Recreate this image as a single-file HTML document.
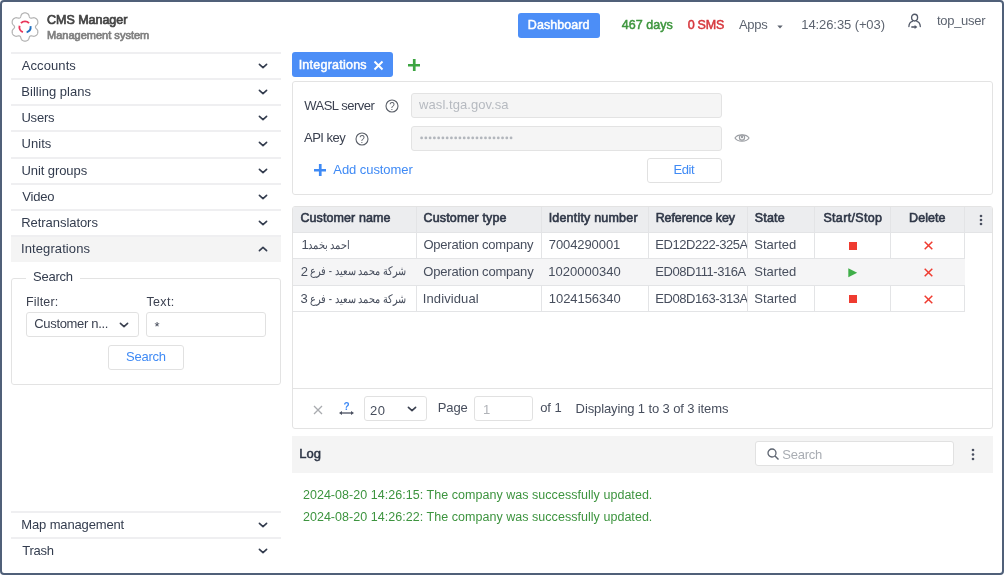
<!DOCTYPE html>
<html><head><meta charset="utf-8">
<style>
*{box-sizing:border-box;margin:0;padding:0}
html,body{width:1004px;height:575px;overflow:hidden;background:#fff}
body{font-family:"Liberation Sans",sans-serif;font-size:13px;color:#333c4e;position:relative}
.frame{position:absolute;left:0;top:0;width:1004px;height:575px;border:2px solid #506079;border-radius:4px;z-index:50}
.abs{position:absolute}
.t,.t2{position:absolute;white-space:nowrap}
.wrap{position:absolute;left:0;top:0;width:1004px;height:575px;will-change:transform}
.sep{position:absolute;left:11px;width:270px;height:2px;margin-top:-1px;background:#efeff1}
</style></head>
<body>
<div class="wrap">
<svg class="abs" style="left:10.4px;top:12.1px" width="30" height="30" viewBox="0 0 30 30"><path d="M25.50,15.00 L25.50,15.27 L25.51,15.55 L25.62,15.84 L25.83,16.14 L26.11,16.46 L26.45,16.81 L26.80,17.19 L27.14,17.58 L27.44,17.99 L27.66,18.39 L27.79,18.79 L27.81,19.16 L27.78,19.53 L27.82,19.92 L27.82,20.31 L27.78,20.69 L27.71,21.06 L27.61,21.42 L27.47,21.77 L27.30,22.10 L27.10,22.41 L26.87,22.71 L26.61,22.98 L26.32,23.22 L26.01,23.45 L25.67,23.64 L25.31,23.81 L25.01,24.02 L24.68,24.18 L24.27,24.27 L23.80,24.28 L23.30,24.22 L22.79,24.12 L22.29,24.01 L21.82,23.89 L21.40,23.81 L21.04,23.78 L20.73,23.83 L20.49,23.95 L20.25,24.09 L20.01,24.23 L19.78,24.38 L19.59,24.62 L19.43,24.95 L19.29,25.36 L19.15,25.82 L19.01,26.31 L18.84,26.80 L18.63,27.26 L18.39,27.66 L18.11,27.97 L17.80,28.18 L17.47,28.34 L17.15,28.56 L16.81,28.76 L16.46,28.92 L16.10,29.04 L15.74,29.13 L15.37,29.18 L15.00,29.20 L14.63,29.18 L14.26,29.13 L13.90,29.04 L13.54,28.92 L13.19,28.76 L12.85,28.56 L12.53,28.34 L12.20,28.18 L11.89,27.97 L11.61,27.66 L11.37,27.26 L11.16,26.80 L10.99,26.31 L10.85,25.82 L10.71,25.36 L10.57,24.95 L10.41,24.62 L10.22,24.38 L9.99,24.23 L9.75,24.09 L9.51,23.95 L9.27,23.83 L8.96,23.78 L8.60,23.81 L8.18,23.89 L7.71,24.01 L7.21,24.12 L6.70,24.22 L6.20,24.28 L5.73,24.27 L5.32,24.18 L4.99,24.02 L4.69,23.81 L4.33,23.64 L3.99,23.45 L3.68,23.22 L3.39,22.98 L3.13,22.71 L2.90,22.41 L2.70,22.10 L2.53,21.77 L2.39,21.42 L2.29,21.06 L2.22,20.69 L2.18,20.31 L2.18,19.92 L2.22,19.53 L2.19,19.16 L2.21,18.79 L2.34,18.39 L2.56,17.99 L2.86,17.58 L3.20,17.19 L3.55,16.81 L3.89,16.46 L4.17,16.14 L4.38,15.84 L4.49,15.55 L4.50,15.27 L4.50,15.00 L4.50,14.73 L4.49,14.45 L4.38,14.16 L4.17,13.86 L3.89,13.54 L3.55,13.19 L3.20,12.81 L2.86,12.42 L2.56,12.01 L2.34,11.61 L2.21,11.21 L2.19,10.84 L2.22,10.47 L2.18,10.08 L2.18,9.69 L2.22,9.31 L2.29,8.94 L2.39,8.58 L2.53,8.23 L2.70,7.90 L2.90,7.59 L3.13,7.29 L3.39,7.02 L3.68,6.78 L3.99,6.55 L4.33,6.36 L4.69,6.19 L4.99,5.98 L5.32,5.82 L5.73,5.73 L6.20,5.72 L6.70,5.78 L7.21,5.88 L7.71,5.99 L8.18,6.11 L8.60,6.19 L8.96,6.22 L9.27,6.17 L9.51,6.05 L9.75,5.91 L9.99,5.77 L10.22,5.62 L10.41,5.38 L10.57,5.05 L10.71,4.64 L10.85,4.18 L10.99,3.69 L11.16,3.20 L11.37,2.74 L11.61,2.34 L11.89,2.03 L12.20,1.82 L12.53,1.66 L12.85,1.44 L13.19,1.24 L13.54,1.08 L13.90,0.96 L14.26,0.87 L14.63,0.82 L15.00,0.80 L15.37,0.82 L15.74,0.87 L16.10,0.96 L16.46,1.08 L16.81,1.24 L17.15,1.44 L17.47,1.66 L17.80,1.82 L18.11,2.03 L18.39,2.34 L18.63,2.74 L18.84,3.20 L19.01,3.69 L19.15,4.18 L19.29,4.64 L19.43,5.05 L19.59,5.38 L19.78,5.62 L20.01,5.77 L20.25,5.91 L20.49,6.05 L20.73,6.17 L21.04,6.22 L21.40,6.19 L21.82,6.11 L22.29,5.99 L22.79,5.88 L23.30,5.78 L23.80,5.72 L24.27,5.73 L24.68,5.82 L25.01,5.98 L25.31,6.19 L25.67,6.36 L26.01,6.55 L26.32,6.78 L26.61,7.02 L26.87,7.29 L27.10,7.59 L27.30,7.90 L27.47,8.23 L27.61,8.58 L27.71,8.94 L27.78,9.31 L27.82,9.69 L27.82,10.08 L27.78,10.47 L27.81,10.84 L27.79,11.21 L27.66,11.61 L27.44,12.01 L27.14,12.42 L26.80,12.81 L26.45,13.19 L26.11,13.54 L25.83,13.86 L25.62,14.16 L25.51,14.45 L25.50,14.73Z" fill="none" stroke="#b3b3b3" stroke-width="1.2"/><path d="M10.97,11.11 A5.6,5.6 0 0 1 19.03,11.11" fill="none" stroke="#e8365a" stroke-width="1.9"/><path d="M12.90,20.19 A5.6,5.6 0 0 1 9.57,13.65" fill="none" stroke="#e8365a" stroke-width="1.9"/><path d="M20.55,14.22 A5.6,5.6 0 0 1 16.64,20.36" fill="none" stroke="#1f6fc0" stroke-width="1.9"/></svg>
<div class="t" style="left:47.09px;top:13.82px;font-size:12.5px;line-height:12.5px;color:#444444;font-weight:normal;letter-spacing:-0.037px;-webkit-text-stroke:0.7px #444444;">CMS Manager</div>
<div class="t" style="left:47.00px;top:29.69px;font-size:11px;line-height:11px;color:#808080;font-weight:normal;letter-spacing:0.010px;-webkit-text-stroke:0.7px #808080;">Management system</div>
<div class="abs" style="left:518px;top:13px;width:82px;height:25px;background:#4c8ef7;border-radius:3px"></div>
<div class="t" style="left:527.81px;top:19.32px;font-size:12.5px;line-height:12.5px;color:#ffffff;font-weight:normal;letter-spacing:0.071px;-webkit-text-stroke:0.5px #ffffff;">Dashboard</div>
<div class="t" style="left:621.82px;top:18.62px;font-size:12.5px;line-height:12.5px;color:#3e963e;font-weight:normal;letter-spacing:0.020px;-webkit-text-stroke:0.5px #3e963e;">467 days</div>
<div class="t" style="left:687.66px;top:18.72px;font-size:12.5px;line-height:12.5px;color:#d6353b;font-weight:normal;letter-spacing:-0.229px;-webkit-text-stroke:0.5px #d6353b;">0 SMS</div>
<div class="t" style="left:739.04px;top:18.30px;font-size:13px;line-height:13px;color:#5d6470;font-weight:normal;letter-spacing:-0.333px;">Apps</div>
<svg class="abs" style="left:777px;top:24.5px" width="6" height="4" viewBox="0 0 6 4"><path d="M0.3,0.5 L5.7,0.5 L3,3.6Z" fill="#5d6470"/></svg>
<div class="t" style="left:801.35px;top:18.30px;font-size:13px;line-height:13px;color:#5d6470;font-weight:normal;letter-spacing:-0.101px;">14:26:35 (+03)</div>
<svg class="abs" style="left:903px;top:10px" width="24" height="22" viewBox="0 0 24 22"><ellipse cx="11.6" cy="7.6" rx="3.0" ry="3.4" fill="none" stroke="#525968" stroke-width="1.35"/><path d="M9.4,11.3 C7.2,11.9 6.0,13.0 5.9,16.6 M13.8,11.3 C16.0,11.9 17.2,13.0 17.3,16.6" fill="none" stroke="#525968" stroke-width="1.3" stroke-linecap="round"/><path d="M8.3,17.0 H12.6" stroke="#525968" stroke-width="1.6"/><path d="M11.6,15.0 L14.4,17.0 L11.6,19.0Z" fill="#525968"/></svg>
<div class="t" style="left:936.94px;top:14.40px;font-size:13px;line-height:13px;color:#5d6470;font-weight:normal;letter-spacing:-0.286px;">top_user</div>
<div class="sep" style="top:53px"></div>
<div class="t" style="left:21.69px;top:58.80px;font-size:13px;line-height:13px;color:#333c4e;font-weight:normal;letter-spacing:0.101px;">Accounts</div>
<svg class="abs" style="left:257.5px;top:63.3px" width="10" height="6" viewBox="0 0 10 6"><path d="M1.4,1.3 L5,4.7 L8.6,1.3" fill="none" stroke="#333c4e" stroke-width="1.6" stroke-linecap="round" stroke-linejoin="round"/></svg>
<div class="sep" style="top:79px"></div>
<div class="t" style="left:21.37px;top:84.80px;font-size:13px;line-height:13px;color:#333c4e;font-weight:normal;letter-spacing:0.018px;">Billing plans</div>
<svg class="abs" style="left:257.5px;top:89.3px" width="10" height="6" viewBox="0 0 10 6"><path d="M1.4,1.3 L5,4.7 L8.6,1.3" fill="none" stroke="#333c4e" stroke-width="1.6" stroke-linecap="round" stroke-linejoin="round"/></svg>
<div class="sep" style="top:105px"></div>
<div class="t" style="left:21.41px;top:110.80px;font-size:13px;line-height:13px;color:#333c4e;font-weight:normal;letter-spacing:-0.187px;">Users</div>
<svg class="abs" style="left:257.5px;top:115.3px" width="10" height="6" viewBox="0 0 10 6"><path d="M1.4,1.3 L5,4.7 L8.6,1.3" fill="none" stroke="#333c4e" stroke-width="1.6" stroke-linecap="round" stroke-linejoin="round"/></svg>
<div class="sep" style="top:131px"></div>
<div class="t" style="left:21.45px;top:136.80px;font-size:13px;line-height:13px;color:#333c4e;font-weight:normal;letter-spacing:0.067px;">Units</div>
<svg class="abs" style="left:257.5px;top:141.3px" width="10" height="6" viewBox="0 0 10 6"><path d="M1.4,1.3 L5,4.7 L8.6,1.3" fill="none" stroke="#333c4e" stroke-width="1.6" stroke-linecap="round" stroke-linejoin="round"/></svg>
<div class="sep" style="top:158px"></div>
<div class="t" style="left:21.46px;top:163.80px;font-size:13px;line-height:13px;color:#333c4e;font-weight:normal;letter-spacing:-0.078px;">Unit groups</div>
<svg class="abs" style="left:257.5px;top:168.3px" width="10" height="6" viewBox="0 0 10 6"><path d="M1.4,1.3 L5,4.7 L8.6,1.3" fill="none" stroke="#333c4e" stroke-width="1.6" stroke-linecap="round" stroke-linejoin="round"/></svg>
<div class="sep" style="top:184px"></div>
<div class="t" style="left:22.17px;top:189.80px;font-size:13px;line-height:13px;color:#333c4e;font-weight:normal;letter-spacing:-0.149px;">Video</div>
<svg class="abs" style="left:257.5px;top:194.3px" width="10" height="6" viewBox="0 0 10 6"><path d="M1.4,1.3 L5,4.7 L8.6,1.3" fill="none" stroke="#333c4e" stroke-width="1.6" stroke-linecap="round" stroke-linejoin="round"/></svg>
<div class="sep" style="top:210px"></div>
<div class="t" style="left:21.28px;top:215.80px;font-size:13px;line-height:13px;color:#333c4e;font-weight:normal;letter-spacing:-0.058px;">Retranslators</div>
<svg class="abs" style="left:257.5px;top:220.3px" width="10" height="6" viewBox="0 0 10 6"><path d="M1.4,1.3 L5,4.7 L8.6,1.3" fill="none" stroke="#333c4e" stroke-width="1.6" stroke-linecap="round" stroke-linejoin="round"/></svg>
<div class="sep" style="top:236px"></div>
<div class="abs" style="left:11px;top:237px;width:270px;height:25px;background:#f4f4f4"></div>
<div class="t" style="left:21.10px;top:241.80px;font-size:13px;line-height:13px;color:#333c4e;font-weight:normal;letter-spacing:0.085px;">Integrations</div>
<svg class="abs" style="left:257.5px;top:246px" width="10" height="6" viewBox="0 0 10 6"><path d="M1.4,4.7 L5,1.3 L8.6,4.7" fill="none" stroke="#333c4e" stroke-width="1.6" stroke-linecap="round" stroke-linejoin="round"/></svg>
<div class="abs" style="left:11px;top:278px;width:270px;height:107px;border:1px solid #e3e3e3;border-radius:3px"></div>
<div class="abs" style="left:26px;top:272px;width:54px;height:10px;background:#fff"></div>
<div class="t" style="left:32.97px;top:270.40px;font-size:13px;line-height:13px;color:#333c4e;font-weight:normal;letter-spacing:-0.219px;">Search</div>
<div class="t" style="left:26.03px;top:296.12px;font-size:12.5px;line-height:12.5px;color:#3b4150;font-weight:normal;letter-spacing:0.158px;">Filter:</div>
<div class="t" style="left:146.49px;top:296.42px;font-size:12.5px;line-height:12.5px;color:#3b4150;font-weight:normal;letter-spacing:0.320px;">Text:</div>
<div class="abs" style="left:26px;top:312px;width:113px;height:25px;border:1px solid #e1e1e1;border-radius:3px"></div>
<div class="t" style="left:34.31px;top:317.30px;font-size:13px;line-height:13px;color:#3b4150;font-weight:normal;letter-spacing:-0.333px;">Customer n...</div>
<svg class="abs" style="left:119px;top:322px" width="10" height="6" viewBox="0 0 10 6"><path d="M1.4,1.3 L5,4.7 L8.6,1.3" fill="none" stroke="#3b4150" stroke-width="1.6" stroke-linecap="round" stroke-linejoin="round"/></svg>
<div class="abs" style="left:146px;top:312px;width:120px;height:25px;border:1px solid #e1e1e1;border-radius:3px"></div>
<div class="t" style="left:154.50px;top:320.00px;font-size:13px;line-height:13px;color:#3b4150;font-weight:normal;letter-spacing:0.000px;">*</div>
<div class="abs" style="left:108px;top:345px;width:76px;height:25px;border:1px solid #e1e1e1;border-radius:3px"></div>
<div class="t" style="left:125.95px;top:350.00px;font-size:13px;line-height:13px;color:#3f8af5;font-weight:normal;letter-spacing:-0.226px;">Search</div>
<div class="sep" style="top:512px"></div>
<div class="t" style="left:21.37px;top:517.80px;font-size:13px;line-height:13px;color:#333c4e;font-weight:normal;letter-spacing:-0.151px;">Map management</div>
<svg class="abs" style="left:257.5px;top:522.3px" width="10" height="6" viewBox="0 0 10 6"><path d="M1.4,1.3 L5,4.7 L8.6,1.3" fill="none" stroke="#333c4e" stroke-width="1.6" stroke-linecap="round" stroke-linejoin="round"/></svg>
<div class="sep" style="top:538px"></div>
<div class="t" style="left:22.15px;top:543.80px;font-size:13px;line-height:13px;color:#333c4e;font-weight:normal;letter-spacing:-0.213px;">Trash</div>
<svg class="abs" style="left:257.5px;top:548.3px" width="10" height="6" viewBox="0 0 10 6"><path d="M1.4,1.3 L5,4.7 L8.6,1.3" fill="none" stroke="#333c4e" stroke-width="1.6" stroke-linecap="round" stroke-linejoin="round"/></svg>
<div class="abs" style="left:292px;top:52px;width:101px;height:25px;background:#4c8ef7;border-radius:3px"></div>
<div class="t" style="left:298.65px;top:58.92px;font-size:12.5px;line-height:12.5px;color:#ffffff;font-weight:normal;letter-spacing:0.237px;-webkit-text-stroke:0.5px #ffffff;">Integrations</div>
<svg class="abs" style="left:373px;top:60px" width="11" height="11" viewBox="0 0 11 11"><path d="M1.5,1.5 L9.5,9.5 M9.5,1.5 L1.5,9.5" stroke="#fff" stroke-width="2"/></svg>
<svg class="abs" style="left:407.8px;top:58.5px" width="12.5" height="12.5" viewBox="0 0 12.5 12.5"><path d="M6.25,0 V12.5 M0,6.25 H12.5" stroke="#3da542" stroke-width="2.7"/></svg>
<div class="abs" style="left:292px;top:81px;width:701px;height:114px;border:1px solid #e3e3e3;border-radius:3px"></div>
<div class="t" style="left:304.22px;top:98.50px;font-size:13px;line-height:13px;color:#3b4150;font-weight:normal;letter-spacing:-0.493px;">WASL server</div>
<svg class="abs" style="left:384.5px;top:98.5px" width="14" height="14" viewBox="0 0 14 14"><circle cx="7" cy="7" r="6" fill="none" stroke="#5a5f68" stroke-width="1.1"/><text x="7" y="10.6" text-anchor="middle" font-family="Liberation Sans" font-size="10" fill="#5a5f68">?</text></svg>
<div class="abs" style="left:411px;top:93px;width:311px;height:25px;border:1px solid #e3e3e3;border-radius:3px;background:#f5f5f5"></div>
<div class="t" style="left:419.12px;top:97.90px;font-size:13px;line-height:13px;color:#b6bac0;font-weight:normal;letter-spacing:0.053px;">wasl.tga.gov.sa</div>
<div class="t" style="left:304.10px;top:131.00px;font-size:13px;line-height:13px;color:#3b4150;font-weight:normal;letter-spacing:-0.542px;">API key</div>
<svg class="abs" style="left:355px;top:131.5px" width="14" height="14" viewBox="0 0 14 14"><circle cx="7" cy="7" r="6" fill="none" stroke="#5a5f68" stroke-width="1.1"/><text x="7" y="10.6" text-anchor="middle" font-family="Liberation Sans" font-size="10" fill="#5a5f68">?</text></svg>
<div class="abs" style="left:411px;top:126px;width:311px;height:25px;border:1px solid #e3e3e3;border-radius:3px;background:#f5f5f5"></div>
<svg class="abs" style="left:420px;top:136px" width="100" height="4" viewBox="0 0 100 4"><circle cx="1.60" cy="1.9" r="1.4" fill="#b2b6bc"/><circle cx="5.86" cy="1.9" r="1.4" fill="#b2b6bc"/><circle cx="10.12" cy="1.9" r="1.4" fill="#b2b6bc"/><circle cx="14.38" cy="1.9" r="1.4" fill="#b2b6bc"/><circle cx="18.64" cy="1.9" r="1.4" fill="#b2b6bc"/><circle cx="22.90" cy="1.9" r="1.4" fill="#b2b6bc"/><circle cx="27.16" cy="1.9" r="1.4" fill="#b2b6bc"/><circle cx="31.42" cy="1.9" r="1.4" fill="#b2b6bc"/><circle cx="35.68" cy="1.9" r="1.4" fill="#b2b6bc"/><circle cx="39.94" cy="1.9" r="1.4" fill="#b2b6bc"/><circle cx="44.20" cy="1.9" r="1.4" fill="#b2b6bc"/><circle cx="48.46" cy="1.9" r="1.4" fill="#b2b6bc"/><circle cx="52.72" cy="1.9" r="1.4" fill="#b2b6bc"/><circle cx="56.98" cy="1.9" r="1.4" fill="#b2b6bc"/><circle cx="61.24" cy="1.9" r="1.4" fill="#b2b6bc"/><circle cx="65.50" cy="1.9" r="1.4" fill="#b2b6bc"/><circle cx="69.76" cy="1.9" r="1.4" fill="#b2b6bc"/><circle cx="74.02" cy="1.9" r="1.4" fill="#b2b6bc"/><circle cx="78.28" cy="1.9" r="1.4" fill="#b2b6bc"/><circle cx="82.54" cy="1.9" r="1.4" fill="#b2b6bc"/><circle cx="86.80" cy="1.9" r="1.4" fill="#b2b6bc"/><circle cx="91.06" cy="1.9" r="1.4" fill="#b2b6bc"/></svg>
<svg class="abs" style="left:734px;top:132px" width="16" height="12" viewBox="0 0 16 12"><path d="M1,6 C3.5,1.8 12.5,1.8 15,6 C12.5,10.2 3.5,10.2 1,6Z" fill="none" stroke="#9c9fa4" stroke-width="1.2"/><circle cx="8" cy="5.6" r="2.6" fill="none" stroke="#9c9fa4" stroke-width="1.2"/><circle cx="8" cy="5" r="1.2" fill="#9c9fa4"/></svg>
<svg class="abs" style="left:313.6px;top:163.8px" width="12.5" height="12.5" viewBox="0 0 12.5 12.5"><path d="M6.25,0 V12.5 M0,6.25 H12.5" stroke="#3f8af5" stroke-width="2.7"/></svg>
<div class="t" style="left:333.37px;top:162.80px;font-size:13px;line-height:13px;color:#3f8af5;font-weight:normal;letter-spacing:-0.074px;">Add customer</div>
<div class="abs" style="left:647px;top:158px;width:75px;height:25px;border:1px solid #e1e1e1;border-radius:3px"></div>
<div class="t" style="left:673.46px;top:163.30px;font-size:13px;line-height:13px;color:#3f8af5;font-weight:normal;letter-spacing:-0.417px;">Edit</div>
<div class="abs" style="left:292px;top:206px;width:701px;height:223px;border:1px solid #e3e3e3;border-radius:3px"></div>
<div class="abs" style="left:293px;top:207px;width:699px;height:25px;background:#ecedef;border-radius:2px 2px 0 0"></div>
<div class="abs" style="left:416px;top:207px;width:1px;height:105px;background:#e3e4e6"></div>
<div class="abs" style="left:541px;top:207px;width:1px;height:105px;background:#e3e4e6"></div>
<div class="abs" style="left:648px;top:207px;width:1px;height:105px;background:#e3e4e6"></div>
<div class="abs" style="left:747px;top:207px;width:1px;height:105px;background:#e3e4e6"></div>
<div class="abs" style="left:814px;top:207px;width:1px;height:105px;background:#e3e4e6"></div>
<div class="abs" style="left:890px;top:207px;width:1px;height:105px;background:#e3e4e6"></div>
<div class="abs" style="left:964px;top:207px;width:1px;height:105px;background:#e3e4e6"></div>
<div class="abs" style="left:293px;top:232px;width:699px;height:1px;background:#e3e4e6"></div>
<div class="abs" style="left:293px;top:258px;width:672px;height:1px;background:#e3e4e6"></div>
<div class="abs" style="left:293px;top:259px;width:672px;height:26px;background:#f5f5f6"></div>
<div class="abs" style="left:293px;top:285px;width:672px;height:1px;background:#e3e4e6"></div>
<div class="abs" style="left:293px;top:311px;width:672px;height:1px;background:#e3e4e6"></div>
<div class="t" style="left:300.41px;top:212.42px;font-size:12.5px;line-height:12.5px;color:#2f3747;font-weight:normal;letter-spacing:0.097px;-webkit-text-stroke:0.6px #2f3747;">Customer name</div>
<div class="t" style="left:423.61px;top:212.42px;font-size:12.5px;line-height:12.5px;color:#2f3747;font-weight:normal;letter-spacing:0.135px;-webkit-text-stroke:0.6px #2f3747;">Customer type</div>
<div class="t" style="left:548.67px;top:212.42px;font-size:12.5px;line-height:12.5px;color:#2f3747;font-weight:normal;letter-spacing:0.197px;-webkit-text-stroke:0.6px #2f3747;">Identity number</div>
<div class="t" style="left:655.68px;top:212.42px;font-size:12.5px;line-height:12.5px;color:#2f3747;font-weight:normal;letter-spacing:-0.102px;-webkit-text-stroke:0.6px #2f3747;">Reference key</div>
<div class="t" style="left:754.75px;top:212.42px;font-size:12.5px;line-height:12.5px;color:#2f3747;font-weight:normal;letter-spacing:0.174px;-webkit-text-stroke:0.6px #2f3747;">State</div>
<div class="t" style="left:823.38px;top:212.42px;font-size:12.5px;line-height:12.5px;color:#2f3747;font-weight:normal;letter-spacing:0.342px;-webkit-text-stroke:0.6px #2f3747;">Start/Stop</div>
<div class="t" style="left:909.07px;top:212.42px;font-size:12.5px;line-height:12.5px;color:#2f3747;font-weight:normal;letter-spacing:0.075px;-webkit-text-stroke:0.6px #2f3747;">Delete</div>
<svg class="abs" style="left:978.5px;top:214px" width="4" height="12" viewBox="0 0 4 12"><circle cx="2" cy="2" r="1.3" fill="#4a5060"/><circle cx="2" cy="6" r="1.3" fill="#4a5060"/><circle cx="2" cy="10" r="1.3" fill="#4a5060"/></svg>
<div class="t" style="left:301.50px;top:238.00px;font-size:13px;line-height:13px;color:#474e5d;font-weight:normal;letter-spacing:0.000px;">1</div>
<div class="t2" style="left:307.8px;top:238.84px;font-size:12px;line-height:12px;color:#474e5d;direction:rtl;unicode-bidi:plaintext;transform:scaleX(0.814);transform-origin:0 0">احمد بخمد</div>
<div class="t" style="left:423.40px;top:238.00px;font-size:13px;line-height:13px;color:#474e5d;font-weight:normal;letter-spacing:-0.207px;">Operation company</div>
<div class="t" style="left:548.84px;top:238.00px;font-size:13px;line-height:13px;color:#474e5d;font-weight:normal;letter-spacing:-0.099px;">7004290001</div>
<div class="abs" style="left:0;top:0;width:747px;height:575px;overflow:hidden"><div class="t" style="left:655.30px;top:238.00px;font-size:13px;line-height:13px;color:#474e5d;font-weight:normal;letter-spacing:0.000px;letter-spacing:-0.45px;">ED12D222-325A</div></div>
<div class="t" style="left:754.18px;top:238.00px;font-size:13px;line-height:13px;color:#474e5d;font-weight:normal;letter-spacing:0.035px;">Started</div>
<div class="abs" style="left:849px;top:241.5px;width:8px;height:8px;background:#ef3b30"></div>
<svg class="abs" style="left:923.5px;top:241.2px" width="9" height="9" viewBox="0 0 9 9"><path d="M0.7,0.7 L8.3,8.3 M8.3,0.7 L0.7,8.3" stroke="#ef3b30" stroke-width="1.5"/></svg>
<div class="t" style="left:300.80px;top:264.50px;font-size:13px;line-height:13px;color:#474e5d;font-weight:normal;letter-spacing:0.000px;">2</div>
<div class="t2" style="left:310.2px;top:265.34px;font-size:12px;line-height:12px;color:#474e5d;direction:rtl;unicode-bidi:plaintext;transform:scaleX(0.808);transform-origin:0 0">شركة محمد سعيد - فرع</div>
<div class="t" style="left:423.34px;top:264.50px;font-size:13px;line-height:13px;color:#474e5d;font-weight:normal;letter-spacing:-0.195px;">Operation company</div>
<div class="t" style="left:548.31px;top:264.50px;font-size:13px;line-height:13px;color:#474e5d;font-weight:normal;letter-spacing:0.013px;">1020000340</div>
<div class="abs" style="left:0;top:0;width:747px;height:575px;overflow:hidden"><div class="t" style="left:655.30px;top:264.50px;font-size:13px;line-height:13px;color:#474e5d;font-weight:normal;letter-spacing:0.000px;letter-spacing:-0.45px;">ED08D111-316A</div></div>
<div class="t" style="left:754.33px;top:264.50px;font-size:13px;line-height:13px;color:#474e5d;font-weight:normal;letter-spacing:0.004px;">Started</div>
<svg class="abs" style="left:848px;top:267.5px" width="10" height="10" viewBox="0 0 10 10"><path d="M0.3,0.3 L9.2,4.8 L0.3,9.3Z" fill="#3fae49"/></svg>
<svg class="abs" style="left:923.5px;top:267.7px" width="9" height="9" viewBox="0 0 9 9"><path d="M0.7,0.7 L8.3,8.3 M8.3,0.7 L0.7,8.3" stroke="#ef3b30" stroke-width="1.5"/></svg>
<div class="t" style="left:300.38px;top:292.00px;font-size:13px;line-height:13px;color:#474e5d;font-weight:normal;letter-spacing:0.000px;">3</div>
<div class="t2" style="left:310.2px;top:292.84px;font-size:12px;line-height:12px;color:#474e5d;direction:rtl;unicode-bidi:plaintext;transform:scaleX(0.808);transform-origin:0 0">شركة محمد سعيد - فرع</div>
<div class="t" style="left:422.84px;top:292.00px;font-size:13px;line-height:13px;color:#474e5d;font-weight:normal;letter-spacing:0.098px;">Individual</div>
<div class="t" style="left:548.79px;top:292.00px;font-size:13px;line-height:13px;color:#474e5d;font-weight:normal;letter-spacing:-0.048px;">1024156340</div>
<div class="abs" style="left:0;top:0;width:747px;height:575px;overflow:hidden"><div class="t" style="left:655.30px;top:292.00px;font-size:13px;line-height:13px;color:#474e5d;font-weight:normal;letter-spacing:0.000px;letter-spacing:-0.45px;">ED08D163-313A</div></div>
<div class="t" style="left:754.36px;top:292.00px;font-size:13px;line-height:13px;color:#474e5d;font-weight:normal;letter-spacing:0.021px;">Started</div>
<div class="abs" style="left:849px;top:295px;width:8px;height:8px;background:#ef3b30"></div>
<svg class="abs" style="left:923.5px;top:294.7px" width="9" height="9" viewBox="0 0 9 9"><path d="M0.7,0.7 L8.3,8.3 M8.3,0.7 L0.7,8.3" stroke="#ef3b30" stroke-width="1.5"/></svg>
<div class="abs" style="left:293px;top:388px;width:699px;height:1px;background:#e3e3e3"></div>
<svg class="abs" style="left:312.5px;top:404.5px" width="10" height="10" viewBox="0 0 10 10"><path d="M1,1 L9,9 M9,1 L1,9" stroke="#a9abaf" stroke-width="1.3"/></svg>
<svg class="abs" style="left:338px;top:400px" width="17" height="17" viewBox="0 0 17 17"><text x="8.5" y="10.3" text-anchor="middle" font-family="Liberation Sans" font-weight="bold" font-size="10" fill="#3f8af5">?</text><path d="M3,13 H14" stroke="#4a5060" stroke-width="1.3"/><path d="M1,13 L4,11 L4,15Z M16,13 L13,11 L13,15Z" fill="#4a5060"/></svg>
<div class="abs" style="left:364px;top:396px;width:63px;height:25px;border:1px solid #e1e1e1;border-radius:3px"></div>
<div class="t" style="left:369.89px;top:403.60px;font-size:13px;line-height:13px;color:#474e5d;font-weight:normal;letter-spacing:0.667px;">20</div>
<svg class="abs" style="left:406.5px;top:405.5px" width="10" height="6" viewBox="0 0 10 6"><path d="M1.4,1.3 L5,4.7 L8.6,1.3" fill="none" stroke="#3b4150" stroke-width="1.6" stroke-linecap="round" stroke-linejoin="round"/></svg>
<div class="t" style="left:437.75px;top:401.40px;font-size:13px;line-height:13px;color:#474e5d;font-weight:normal;letter-spacing:-0.093px;">Page</div>
<div class="abs" style="left:474px;top:396px;width:59px;height:25px;border:1px solid #e1e1e1;border-radius:3px"></div>
<div class="t" style="left:483.00px;top:402.50px;font-size:13px;line-height:13px;color:#b0b3b8;font-weight:normal;letter-spacing:0.000px;">1</div>
<div class="t" style="left:540.20px;top:401.40px;font-size:13px;line-height:13px;color:#474e5d;font-weight:normal;letter-spacing:-0.075px;">of 1</div>
<div class="t" style="left:575.62px;top:401.50px;font-size:13px;line-height:13px;color:#474e5d;font-weight:normal;letter-spacing:-0.121px;">Displaying 1 to 3 of 3 items</div>
<div class="abs" style="left:292px;top:436px;width:701px;height:37px;background:#f4f4f4"></div>
<div class="t" style="left:299.24px;top:446.50px;font-size:13px;line-height:13px;color:#2f3747;font-weight:normal;letter-spacing:0.015px;-webkit-text-stroke:0.5px #2f3747;">Log</div>
<div class="abs" style="left:755px;top:441px;width:199px;height:25px;border:1px solid #e1e1e1;border-radius:3px;background:#fff"></div>
<svg class="abs" style="left:767px;top:448px" width="13" height="12" viewBox="0 0 13 12"><circle cx="5" cy="5" r="4" fill="none" stroke="#5d6470" stroke-width="1.3"/><path d="M8,8 L11.5,11.5" stroke="#5d6470" stroke-width="1.4"/></svg>
<div class="t" style="left:782.36px;top:448.00px;font-size:13px;line-height:13px;color:#a9adb3;font-weight:normal;letter-spacing:-0.272px;">Search</div>
<svg class="abs" style="left:971px;top:448px" width="4" height="13" viewBox="0 0 4 13"><circle cx="2" cy="2" r="1.3" fill="#4a5060"/><circle cx="2" cy="6.5" r="1.3" fill="#4a5060"/><circle cx="2" cy="11" r="1.3" fill="#4a5060"/></svg>
<div class="t" style="left:302.92px;top:489.02px;font-size:12.5px;line-height:12.5px;color:#3d943f;font-weight:normal;letter-spacing:0.039px;">2024-08-20 14:26:15: The company was successfully updated.</div>
<div class="t" style="left:302.92px;top:510.72px;font-size:12.5px;line-height:12.5px;color:#3d943f;font-weight:normal;letter-spacing:0.039px;">2024-08-20 14:26:22: The company was successfully updated.</div>
</div>
<div class="frame"></div>
</body></html>
